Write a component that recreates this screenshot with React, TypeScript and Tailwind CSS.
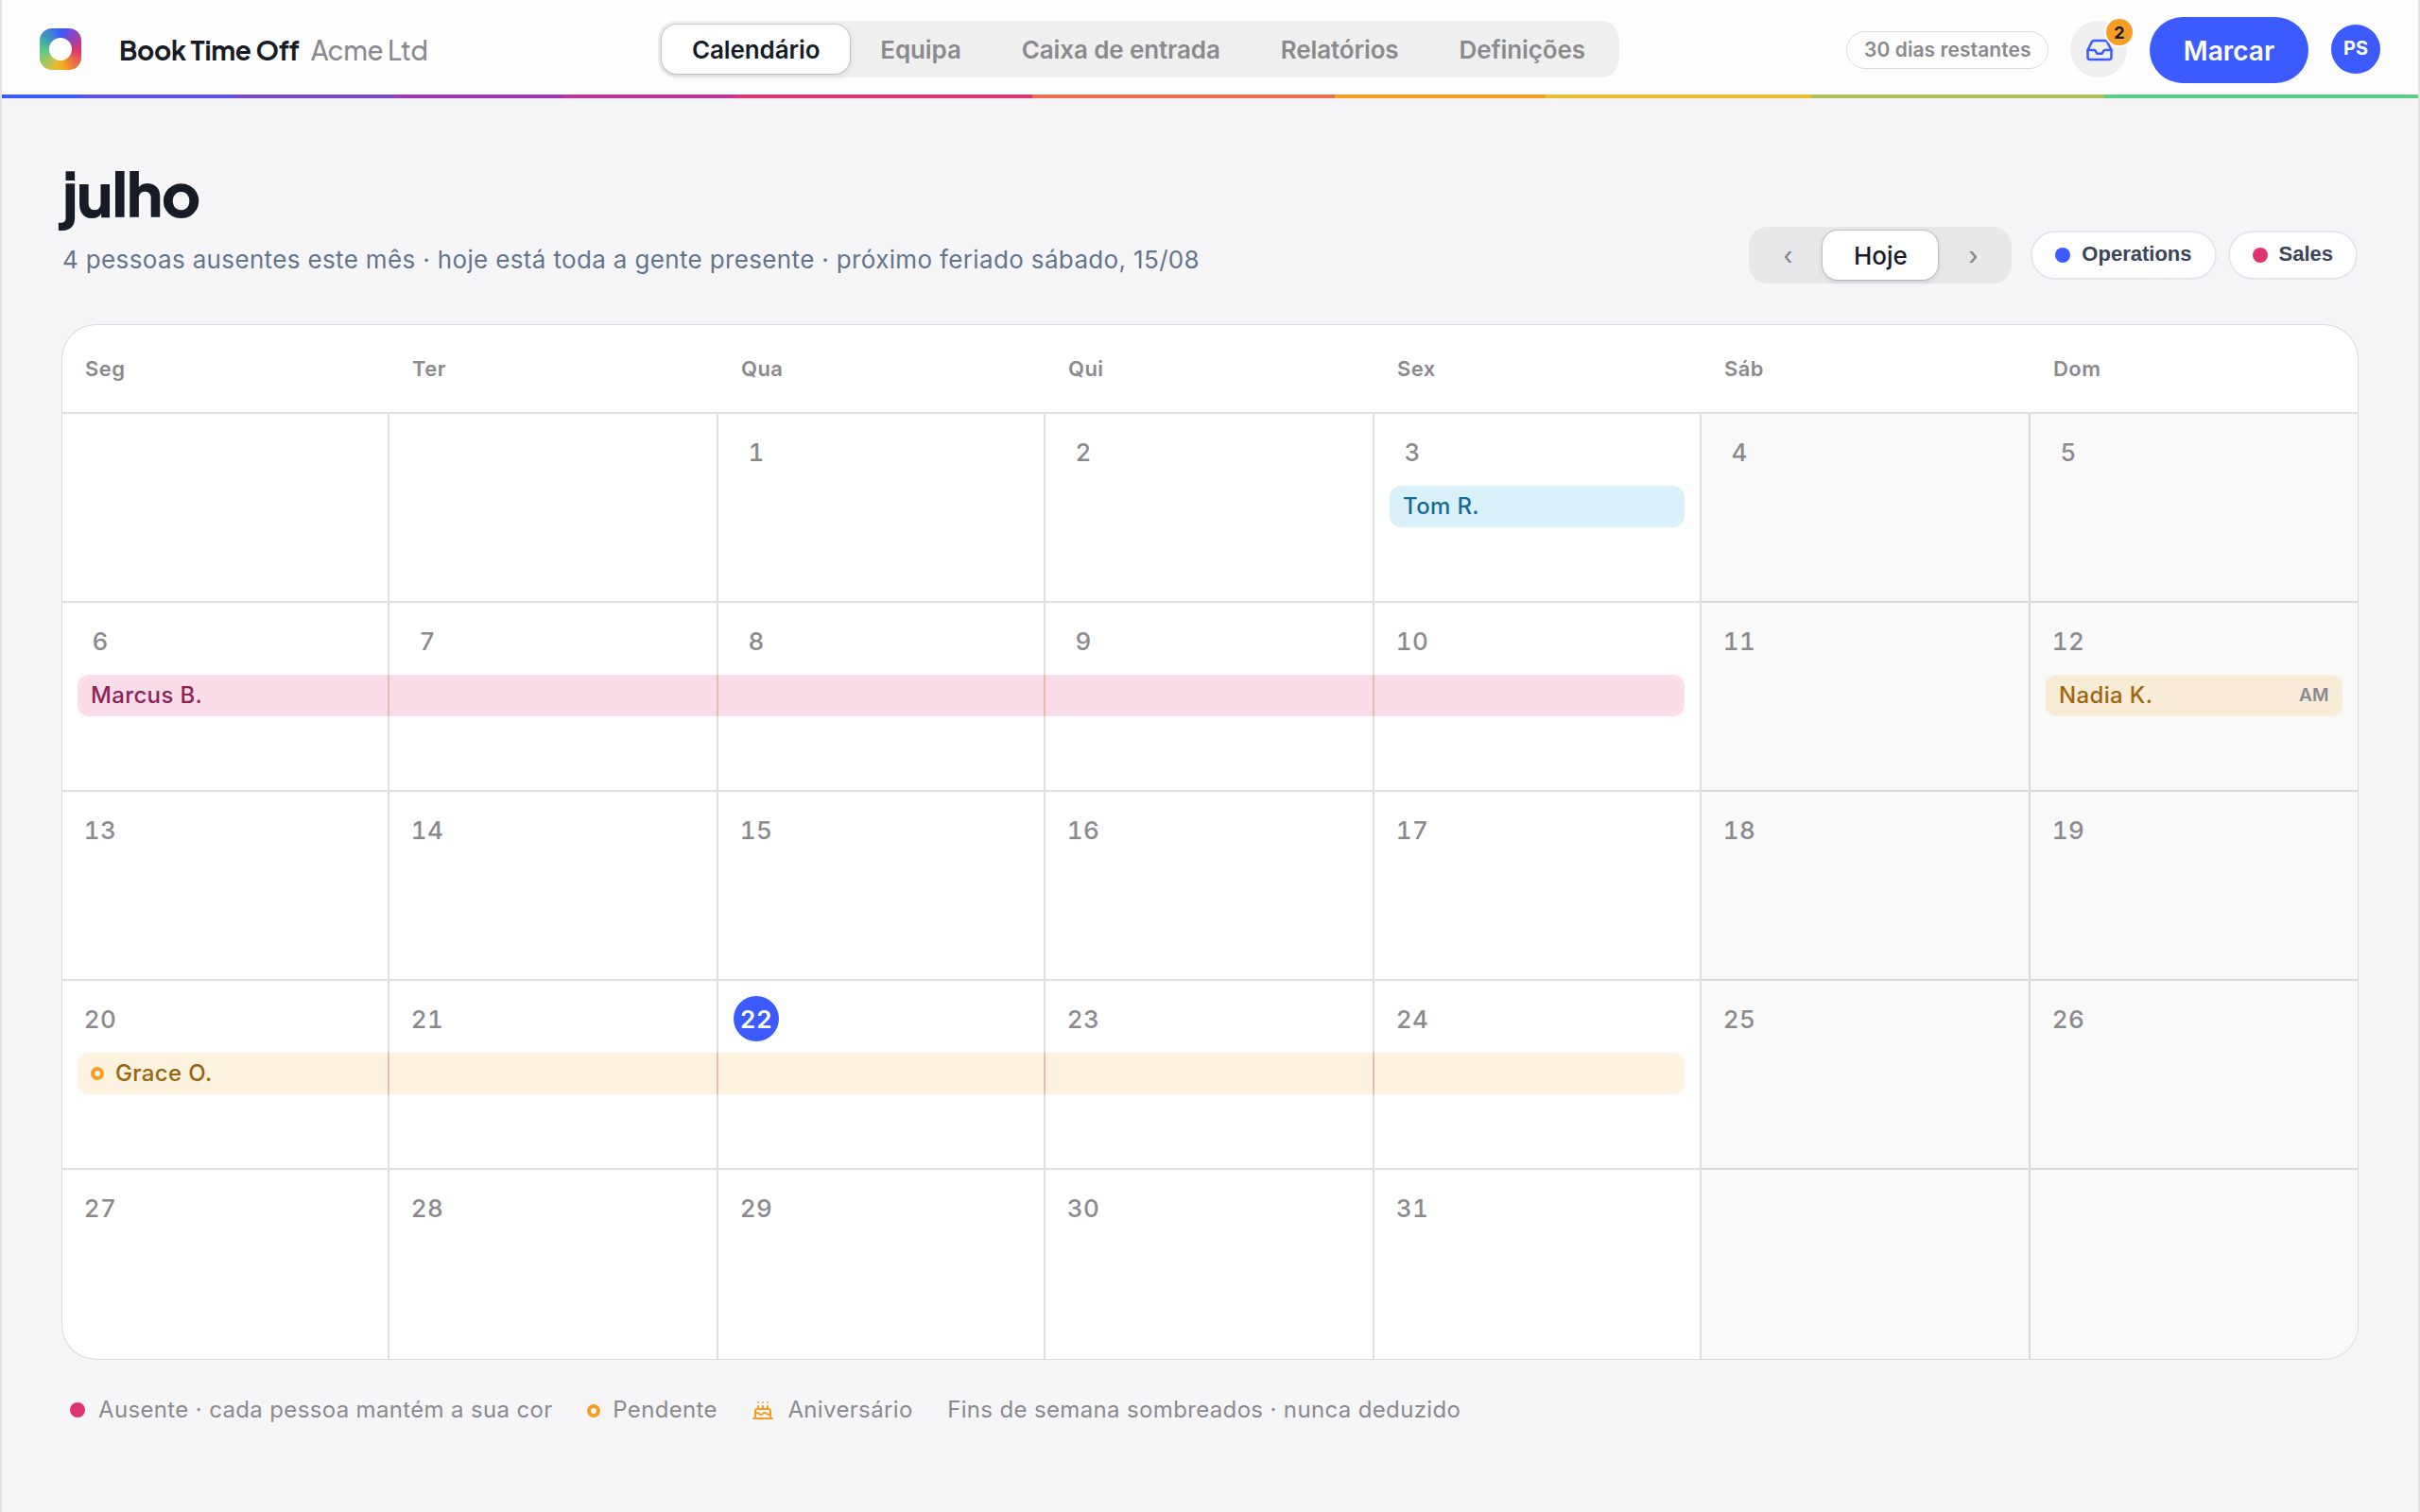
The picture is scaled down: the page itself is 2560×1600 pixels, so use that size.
import React from 'react';
import clsx from 'clsx';
import { Cake, Inbox } from 'lucide-react';

interface Absence {
  name: string;
  week: number;
  from: number;
  to: number;
  tone: 'sky' | 'pink' | 'amber' | 'sand';
  pending?: boolean;
  half?: string;
}

const TABS = ['Calendário', 'Equipa', 'Caixa de entrada', 'Relatórios', 'Definições'];
const WEEKDAYS = ['Seg', 'Ter', 'Qua', 'Qui', 'Sex', 'Sáb', 'Dom'];
const WEEKS = [0, 1, 2, 3, 4];
const FIRST_DAY_OFFSET = 2;
const DAYS_IN_MONTH = 31;
const TODAY = 22;

const ABSENCES: Absence[] = [
  { name: 'Tom R.', week: 0, from: 4, to: 4, tone: 'sky' },
  { name: 'Marcus B.', week: 1, from: 0, to: 4, tone: 'pink' },
  { name: 'Nadia K.', week: 1, from: 6, to: 6, tone: 'sand', half: 'AM' },
  { name: 'Grace O.', week: 3, from: 0, to: 4, tone: 'amber', pending: true },
];

const BAR_TONES = {
  sky: 'bg-[#daf1fc] text-[#166a9a]',
  pink: 'bg-[#fadde8] text-[#8f2157]',
  amber: 'bg-[#fef2e0] text-[#9a640c]',
  sand: 'bg-[#f8ebd7] text-[#a0660e]',
};

const SEAM_TONES = {
  sky: 'bg-[#c4d9e2]',
  pink: 'bg-[#e3b9b4]',
  amber: 'bg-[#e6bdb2]',
  sand: 'bg-[#dfd3c1]',
};

// Seven columns snapped to even pixels so the 2px rules stay crisp
const COLS = 'grid grid-cols-[346px_348px_346px_348px_346px_348px_346px]';

const STRIPE =
  'bg-[linear-gradient(90deg,#3b5bff_82px,#5b53e6_82px_246px,#7a46cc_246px_416px,#9c39ae_416px_593px,#be3694_593px_776px,#de3570_776px_1090px,#ea6e52_1090px_1410px,#f5a024_1410px_1633px,#e9bf34_1633px_1914px,#adc15a_1914px_2224px,#59cd86_2224px)]';

const ACTIVE_SHADOW = 'shadow-[0_0_0_1px_rgba(0,0,0,0.14),0_2px_6px_rgba(0,0,0,0.12)]';

const Logo: React.FC = () => (
  <div className="flex size-11 items-center justify-center rounded-[13px] bg-[conic-gradient(#3b5bff_0deg,#7a46cc_35deg,#e0356f_95deg,#f5a024_165deg,#e9bf34_195deg,#59cd86_265deg,#3f97bd_310deg,#3b5bff_360deg)]">
    <div className="size-6 rounded-full bg-white" />
  </div>
);

const PendingRing: React.FC = () => (
  <span className="size-[14px] shrink-0 rounded-full border-4 border-[#f59e23]" />
);

const Header: React.FC = () => (
  <header>
    <div className="flex h-[100px] items-center bg-[#fdfdfd] px-10 pt-1">
      <div className="flex w-[654px] items-center">
        <Logo />
        <div className="ml-10 mt-px whitespace-nowrap font-['Plus_Jakarta_Sans',Inter,sans-serif] text-[28px] leading-9 tracking-[-0.01em]">
          <span className="font-bold text-[#171b26]">Book Time Off</span>
          <span className="ml-3 font-medium text-[#8a8a8e]">Acme Ltd</span>
        </div>
      </div>
      <nav className="flex h-[60px] rounded-[20px] bg-[#efefef] p-1">
        {TABS.map((tab, i) => (
          <button
            key={tab}
            className={clsx(
              'h-[52px] whitespace-nowrap rounded-2xl px-8 text-[26px] font-semibold tracking-[-0.12px]',
              i === 0 ? `bg-white text-[#171b26] ${ACTIVE_SHADOW}` : 'text-[#8a8a8e]',
            )}
          >
            {tab}
          </button>
        ))}
      </nav>
      <div className="ml-auto flex items-center gap-6 tracking-normal">
        <span className="-mr-px mt-0.5 flex h-10 w-[214px] items-center justify-center whitespace-nowrap rounded-full border border-[#dcdcde] pl-px text-[21px] font-semibold tracking-[0.07px] text-[#8a8a8e]">
          30 dias restantes
        </span>
        <button className="relative flex size-[60px] items-center justify-center rounded-full bg-[#efefef] pl-0.5 pt-px text-[#3b5bff]">
          <Inbox size={30} strokeWidth={2} />
          <span className="absolute -right-1.5 -top-0.5 flex size-7 items-center justify-center rounded-full bg-[#f59e23] text-[18px] font-bold text-[#171b26] ring-2 ring-[#fdfdfd]">
            2
          </span>
        </button>
        <button className="mt-0.5 h-[70px] rounded-full bg-[#3b5bff] px-9 pt-0.5 text-[28px] font-semibold text-white">Marcar</button>
        <span className="flex size-[52px] items-center justify-center rounded-full bg-[#3b5bff] pb-0.5 text-[20px] font-bold text-white">
          PS
        </span>
      </div>
    </div>
    <div className={clsx('h-1', STRIPE)} />
  </header>
);

const TeamChip: React.FC<{ label: string; dot: string }> = ({ label, dot }) => (
  <button className="flex h-[52px] items-center gap-3 rounded-full border-2 border-[#e4e8ee] bg-white px-6 font-['Liberation_Sans',Arial,sans-serif] text-[22px] font-bold tracking-normal text-[#3a4559]">
    <span className={clsx('size-4 rounded-full', dot)} />
    <span className="-mt-1">{label}</span>
  </button>
);

const Toolbar: React.FC = () => (
  <div className="flex h-32 items-end justify-between">
    <div className="h-32">
      <h1 className="font-['Plus_Jakarta_Sans',Inter,sans-serif] text-[64px] font-extrabold leading-[64px] tracking-[-0.02em] text-[#171b26]">
        julho
      </h1>
      <p className="mt-[19px] text-[26px] leading-10 text-[#64748b]">
        4 pessoas ausentes este mês · hoje está toda a gente presente · próximo feriado sábado, 15/08
      </p>
    </div>
    <div className="flex items-center gap-5">
      <div className="flex h-[60px] rounded-[20px] bg-[#e8e8ea] p-1 text-[26px] font-[550] tracking-normal">
        <button className="w-[74px] text-[#8a8a8e]">‹</button>
        <button className={clsx('w-[122px] rounded-2xl bg-white text-[#171b26]', ACTIVE_SHADOW)}>Hoje</button>
        <button className="w-[74px] text-[#8a8a8e]">›</button>
      </div>
      <div className="flex gap-3">
        <TeamChip label="Operations" dot="bg-[#3b5bff]" />
        <TeamChip label="Sales" dot="bg-[#de3570]" />
      </div>
    </div>
  </div>
);

const DayCell: React.FC<{ week: number; col: number }> = ({ week, col }) => {
  const day = week * 7 + col - FIRST_DAY_OFFSET + 1;
  const weekend = col > 4;
  return (
    <div
      className={clsx(
        'row-start-1 h-full px-4 pt-4',
        weekend ? 'border-[#dadada] bg-[#f9f9f9]' : 'border-[#dfdfdf]',
        col < 6 && 'border-r-2',
        week < 4 && 'border-b-2',
      )}
      style={{ gridColumn: col + 1 }}
    >
      {day > 0 && day <= DAYS_IN_MONTH && (
        <span
          className={clsx(
            'flex size-12 items-center justify-center rounded-full text-[26px] tabular-nums',
            day === TODAY ? 'bg-[#3b5bff] font-semibold text-white' : 'font-medium text-[#8a8a8e]',
          )}
        >
          {day}
        </span>
      )}
    </div>
  );
};

const AbsenceBar: React.FC<{ absence: Absence }> = ({ absence }) => {
  const seams = Array.from({ length: absence.to - absence.from }, (_, i) => absence.from + i);
  return (
    <>
      <div
        className={clsx(
          'row-start-1 ml-4 mt-[76px] flex h-11 items-center rounded-xl px-[14px] text-2xl font-medium',
          absence.to === 6 ? 'mr-4' : 'mr-[18px]',
          BAR_TONES[absence.tone],
        )}
        style={{ gridColumn: `${absence.from + 1} / ${absence.to + 2}` }}
      >
        {absence.pending && <span className="mr-3 flex"><PendingRing /></span>}
        {absence.name}
        {absence.half && <span className="ml-auto text-[19px] font-semibold text-[#8a8a8e]">{absence.half}</span>}
      </div>
      {seams.map((col) => (
        <div
          key={col}
          className={clsx('row-start-1 mt-[76px] h-11 w-0.5 justify-self-end', SEAM_TONES[absence.tone])}
          style={{ gridColumn: col + 1 }}
        />
      ))}
    </>
  );
};

const Calendar: React.FC = () => (
  <section className="mt-11 h-[1094px] overflow-hidden rounded-[36px] bg-white shadow-[0_0_0_1px_#dadadc]">
    <div className={clsx(COLS, 'h-[94px] items-center border-b-2 border-[#dfdfdf]')}>
      {WEEKDAYS.map((d) => (
        <span key={d} className="pl-6 text-[22px] font-semibold tracking-[0.02em] text-[#8a8a8e]">{d}</span>
      ))}
    </div>
    {WEEKS.map((week) => (
      <div key={week} className={clsx(COLS, 'h-[200px] grid-rows-[200px] items-start')}>
        {WEEKDAYS.map((d, col) => (
          <DayCell key={d} week={week} col={col} />
        ))}
        {ABSENCES.filter((a) => a.week === week).map((a) => (
          <AbsenceBar key={a.name} absence={a} />
        ))}
      </div>
    ))}
  </section>
);

const Legend: React.FC = () => (
  <div className="mt-9 flex h-9 items-center gap-[36.5px] whitespace-nowrap pl-2 text-2xl text-[#8a8a8e]">
    <span className="flex items-center gap-[14px]">
      <span className="size-4 rounded-full bg-[#de3570]" />
      Ausente · cada pessoa mantém a sua cor
    </span>
    <span className="flex items-center gap-[13px]">
      <span className="mt-0.5 flex"><PendingRing /></span>
      Pendente
    </span>
    <span className="flex items-center gap-[14px]">
      <Cake size={24} strokeWidth={2} className="text-[#f59e23]" />
      Aniversário
    </span>
    <span>Fins de semana sombreados · nunca deduzido</span>
  </div>
);

export default function App() {
  return (
    <div className="h-[1600px] w-[2560px] overflow-hidden border-x-2 border-[#e4e4e7] bg-[#f6f6f9] font-['Inter',sans-serif] tracking-[0.352px]">
      <Header />
      <main className="px-16 pt-[68px]">
        <Toolbar />
        <Calendar />
        <Legend />
      </main>
    </div>
  );
}
